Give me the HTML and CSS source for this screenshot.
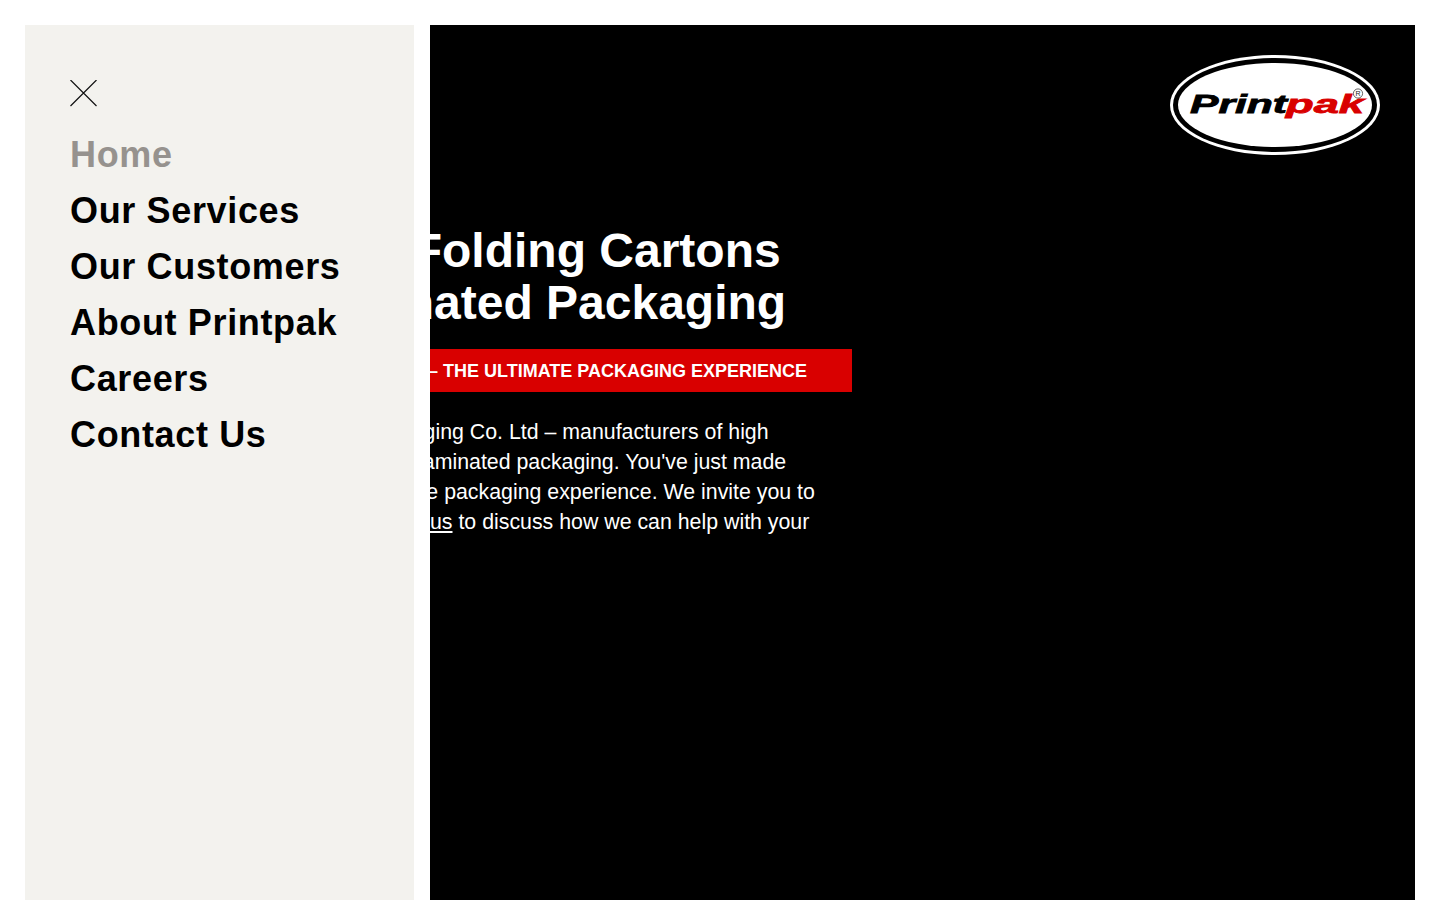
FILE: index.html
```html
<!DOCTYPE html>
<html lang="en">
<head>
<meta charset="utf-8">
<title>Printpak</title>
<link rel="stylesheet" href="styles.css">
</head>
<body>
<div class="page">
  <aside class="sidebar">
    <button class="close" aria-label="Close menu">
      <svg width="27" height="27" viewBox="0 0 27 27"><path d="M0.5 0 L26.5 26 M26.5 0 L0.5 26" stroke="#111" stroke-width="1.2" fill="none"/></svg>
    </button>
    <nav class="nav">
      <a class="nav-link active" href="#">Home</a>
      <a class="nav-link" href="#">Our Services</a>
      <a class="nav-link" href="#">Our Customers</a>
      <a class="nav-link" href="#">About Printpak</a>
      <a class="nav-link" href="#">Careers</a>
      <a class="nav-link" href="#">Contact Us</a>
    </nav>
  </aside>
  <main class="panel">
    <header class="top">
      <svg class="logo" width="210" height="100" viewBox="0 0 210 100">
        <ellipse cx="105" cy="50" rx="105" ry="50" fill="#fff"/>
        <ellipse cx="105" cy="50" rx="102" ry="47" fill="#000"/>
        <ellipse cx="105" cy="50" rx="97" ry="42" fill="#fff"/>
        <text class="logo-text" x="20" y="58" textLength="97" lengthAdjust="spacingAndGlyphs" fill="#000" stroke="#000">Print</text>
        <text class="logo-text" x="116" y="58" textLength="78" lengthAdjust="spacingAndGlyphs" fill="#d90000" stroke="#d90000">pak</text>
        <circle cx="188" cy="38.5" r="4.6" fill="none" stroke="#222" stroke-width="0.7"/>
        <text class="logo-reg" x="188" y="41" text-anchor="middle" fill="#222">R</text>
      </svg>
    </header>
    <section class="hero">
      <h1 class="title">Printpak, Folding Cartons<br>and Laminated Packaging</h1>
      <p class="strap">Printpak – The Ultimate Packaging Experience</p>
      <p class="intro">Welcome to Printpak Packaging Co. Ltd – manufacturers of high<br>quality printed cartons and laminated packaging. You've just made<br>your contact with the ultimate packaging experience. We invite you to<br>browse, and then to contact <a class="inline-link" href="#">us</a> to discuss how we can help with your</p>
    </section>
  </main>
</div>
</body>
</html>
```
FILE: styles.css
```css
* { box-sizing: border-box; }
html, body { margin: 0; height: 900px; overflow: hidden; background: #fff; }
body { font-family: "Liberation Sans", Arial, sans-serif; }
.page { display: flex; height: 900px; padding: 25px 25px 0; gap: 16px; }
.sidebar { width: 389px; flex: none; background: #f3f2ee; padding: 55px 45px 0; }
.close { display: block; width: 27px; height: 27px; padding: 0; border: 0; background: none; }
.close svg { display: block; }
.nav { display: flex; flex-direction: column; margin-top: 20px; }
.nav-link { font-size: 36px; line-height: 56px; font-weight: 700; letter-spacing: 0.65px; color: #000; text-decoration: none; }
.nav-link.active { color: #96928e; }
.panel { flex: 1; background: #000; overflow: hidden; color: #fff; }
.top { display: flex; justify-content: flex-end; padding: 30px 35px 0 0; }
.logo { display: block; }
.logo-text { font-family: "Liberation Sans", Arial, sans-serif; font-weight: 700; font-style: italic; font-size: 26px; stroke-width: 0.8px; }
.logo-reg { font-family: "Liberation Sans", Arial, sans-serif; font-size: 7px; }
.hero { margin: 70px 0 0 -268px; width: 690px; }
.title { margin: 0; padding-left: 32px; font-size: 48px; line-height: 52px; font-weight: 700; white-space: nowrap; }
.strap { margin: 20px 0 0; height: 43px; background: #d90000; font-size: 18px; line-height: 44px; font-weight: 700; text-transform: uppercase; white-space: nowrap; text-align: right; padding-right: 45px; }
.intro { margin: 25px 0 0; font-size: 21.33px; line-height: 30px; white-space: nowrap; }
.inline-link { color: #fff; text-decoration: underline; }
```
